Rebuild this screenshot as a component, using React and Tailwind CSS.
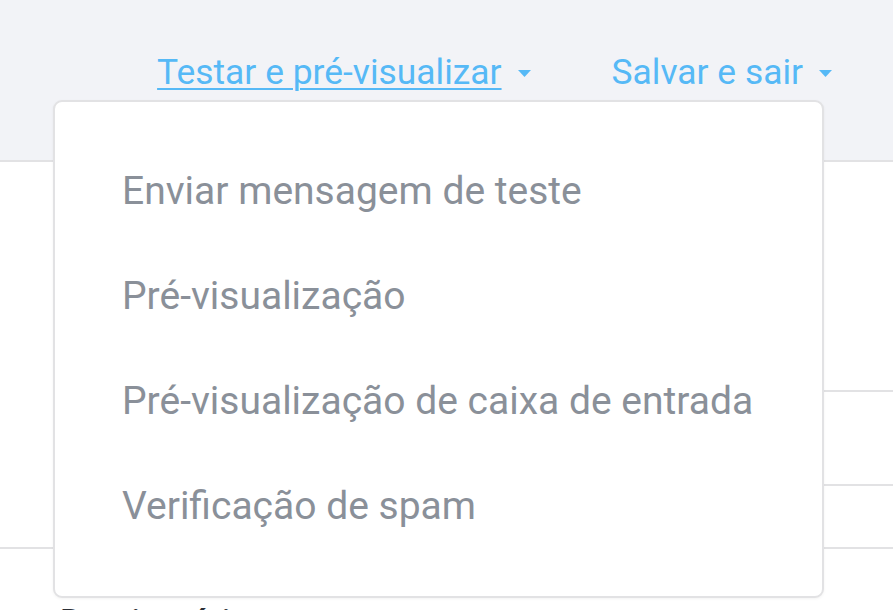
import React from "react";

const Caret = () => (
  <svg width="13" height="7" viewBox="0 0 13 7" className="ml-[16px] mt-[2px]">
    <path d="M0 0 H13 L6.5 7 Z" fill="#56b9f6" />
  </svg>
);

const items = [
  "Enviar mensagem de teste",
  "Pré-visualização",
  "Pré-visualização de caixa de entrada",
  "Verificação de spam",
];

export default function App() {
  return (
    <div
      className="relative w-[893px] h-[610px] overflow-hidden bg-white"
      style={{ fontFamily: "Roboto, 'Liberation Sans', sans-serif" }}
    >
      {/* top bar */}
      <div className="h-[162px] bg-[#f2f3f7] border-b-2 border-[#e2e2e4] flex justify-end pr-[61px] pt-[52px]">
        <div className="flex items-center h-[41px] text-[35.4px] leading-[41px] text-[#56b9f6]">
          <a className="underline underline-offset-[4px] decoration-[1.5px] cursor-pointer">
            Testar e pré-visualizar
          </a>
          <Caret />
        </div>
        <div className="flex items-center h-[41px] ml-[81px] text-[35.4px] leading-[41px] text-[#56b9f6]">
          <span>Salvar e sair</span>
          <Caret />
        </div>
      </div>

      {/* page content behind the menu */}
      <div className="border-b-2 border-[#e2e2e4]">
        <div className="pl-[70px]">
          <div className="h-[230px] border-b-2 border-[#e2e2e4]" />
          <div className="h-[94px] border-b-2 border-[#e2e2e4]" />
          <div className="h-[61px]" />
        </div>
      </div>
      <div className="pl-[60px] pt-[53px] text-[35px] leading-[41px] font-medium text-[#2b2f36]">
        Destinatários
      </div>

      {/* dropdown menu */}
      <div className="absolute left-[53px] top-[100px] w-[771px] h-[498px] bg-white border-2 border-[#e2e2e4] rounded-[9px] shadow-[0_1px_3px_rgba(0,0,0,0.05)] pt-[37px] pl-[67px]">
        {items.map((item) => (
          <div
            key={item}
            className="h-[105px] text-[39px] leading-[105px] text-[#8a9099] whitespace-nowrap cursor-pointer"
          >
            {item}
          </div>
        ))}
      </div>
    </div>
  );
}
